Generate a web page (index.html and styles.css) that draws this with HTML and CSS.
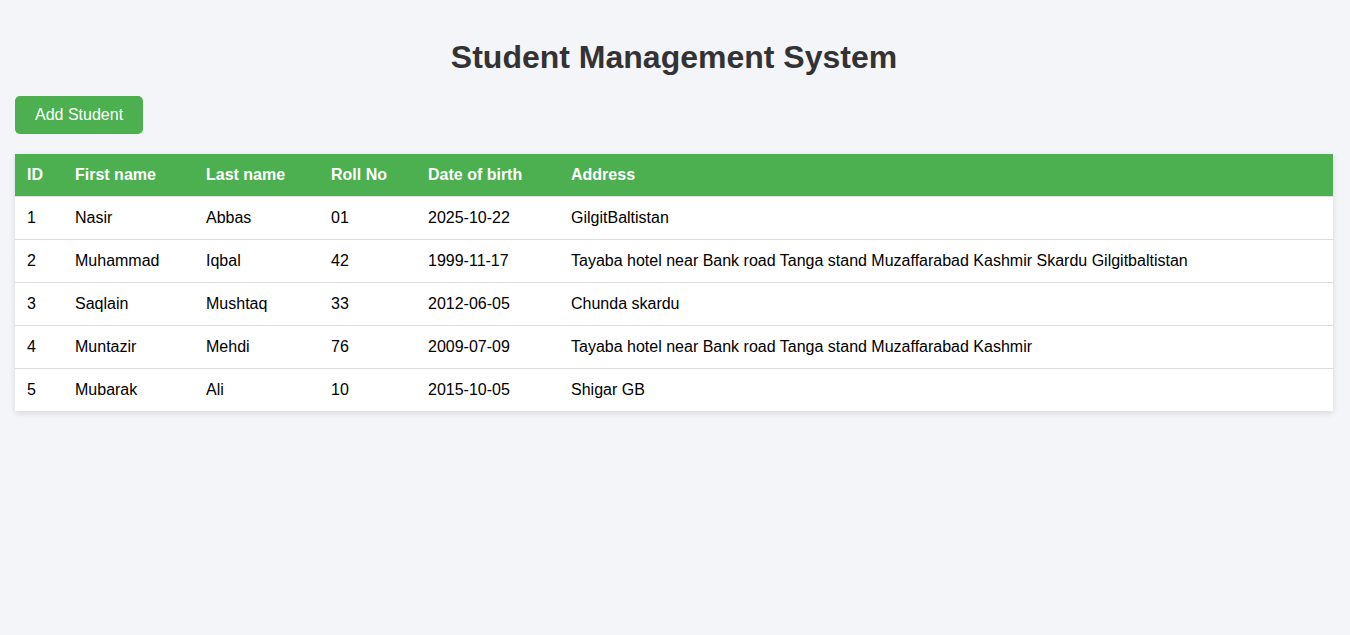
FILE: index.html
```html
<!DOCTYPE html>
<html lang="en">
<head>
<meta charset="utf-8">
<title>Student Management System</title>
<link rel="stylesheet" href="styles.css">
</head>
<body>
<div class="page">
  <h1 class="title">Student Management System</h1>
  <button class="add-btn" type="button">Add Student</button>
  <table class="students">
    <colgroup>
      <col class="c-id"><col class="c-first"><col class="c-last"><col class="c-roll"><col class="c-dob"><col class="c-addr">
    </colgroup>
    <thead>
      <tr><th>ID</th><th>First name</th><th>Last name</th><th>Roll No</th><th>Date of birth</th><th>Address</th></tr>
    </thead>
    <tbody>
      <tr><td>1</td><td>Nasir</td><td>Abbas</td><td>01</td><td>2025-10-22</td><td>GilgitBaltistan</td></tr>
      <tr><td>2</td><td>Muhammad</td><td>Iqbal</td><td>42</td><td>1999-11-17</td><td>Tayaba hotel near Bank road Tanga stand Muzaffarabad Kashmir Skardu Gilgitbaltistan</td></tr>
      <tr><td>3</td><td>Saqlain</td><td>Mushtaq</td><td>33</td><td>2012-06-05</td><td>Chunda skardu</td></tr>
      <tr><td>4</td><td>Muntazir</td><td>Mehdi</td><td>76</td><td>2009-07-09</td><td>Tayaba hotel near Bank road Tanga stand Muzaffarabad Kashmir</td></tr>
      <tr><td>5</td><td>Mubarak</td><td>Ali</td><td>10</td><td>2015-10-05</td><td>Shigar GB</td></tr>
    </tbody>
  </table>
</div>
</body>
</html>
```
FILE: styles.css
```css
html, body {
  margin: 0;
  padding: 0;
  background: #f4f5f9;
}
body {
  font-family: "Liberation Sans", Arial, sans-serif;
  color: #000;
}
.page {
  padding: 20px 17px 20px 15px;
}
.title {
  margin: 19px 0 20px;
  font-size: 32px;
  line-height: 37px;
  font-weight: bold;
  color: #333;
  text-align: center;
}
.add-btn {
  display: block;
  height: 38px;
  margin: 0 0 20px;
  padding: 0 20px;
  border: none;
  border-radius: 5px;
  background: #4caf50;
  color: #fff;
  font-family: "Liberation Sans", Arial, sans-serif;
  font-size: 16px;
  line-height: 18px;
  cursor: pointer;
}
.students {
  width: 100%;
  border-collapse: collapse;
  table-layout: fixed;
  background: #fff;
  box-shadow: 0 2px 6px rgba(0, 0, 0, 0.12);
  font-size: 16px;
  line-height: 18px;
}
.c-id { width: 48px; }
.c-first { width: 131px; }
.c-last { width: 125px; }
.c-roll { width: 97px; }
.c-dob { width: 143px; }
.students th,
.students td {
  padding: 12px;
  text-align: left;
  white-space: nowrap;
  border-bottom: 1px solid #ddd;
}
.students th {
  background: #4caf50;
  color: #fff;
  font-weight: bold;
}
.students tbody tr:last-child td {
  border-bottom: none;
}
```
